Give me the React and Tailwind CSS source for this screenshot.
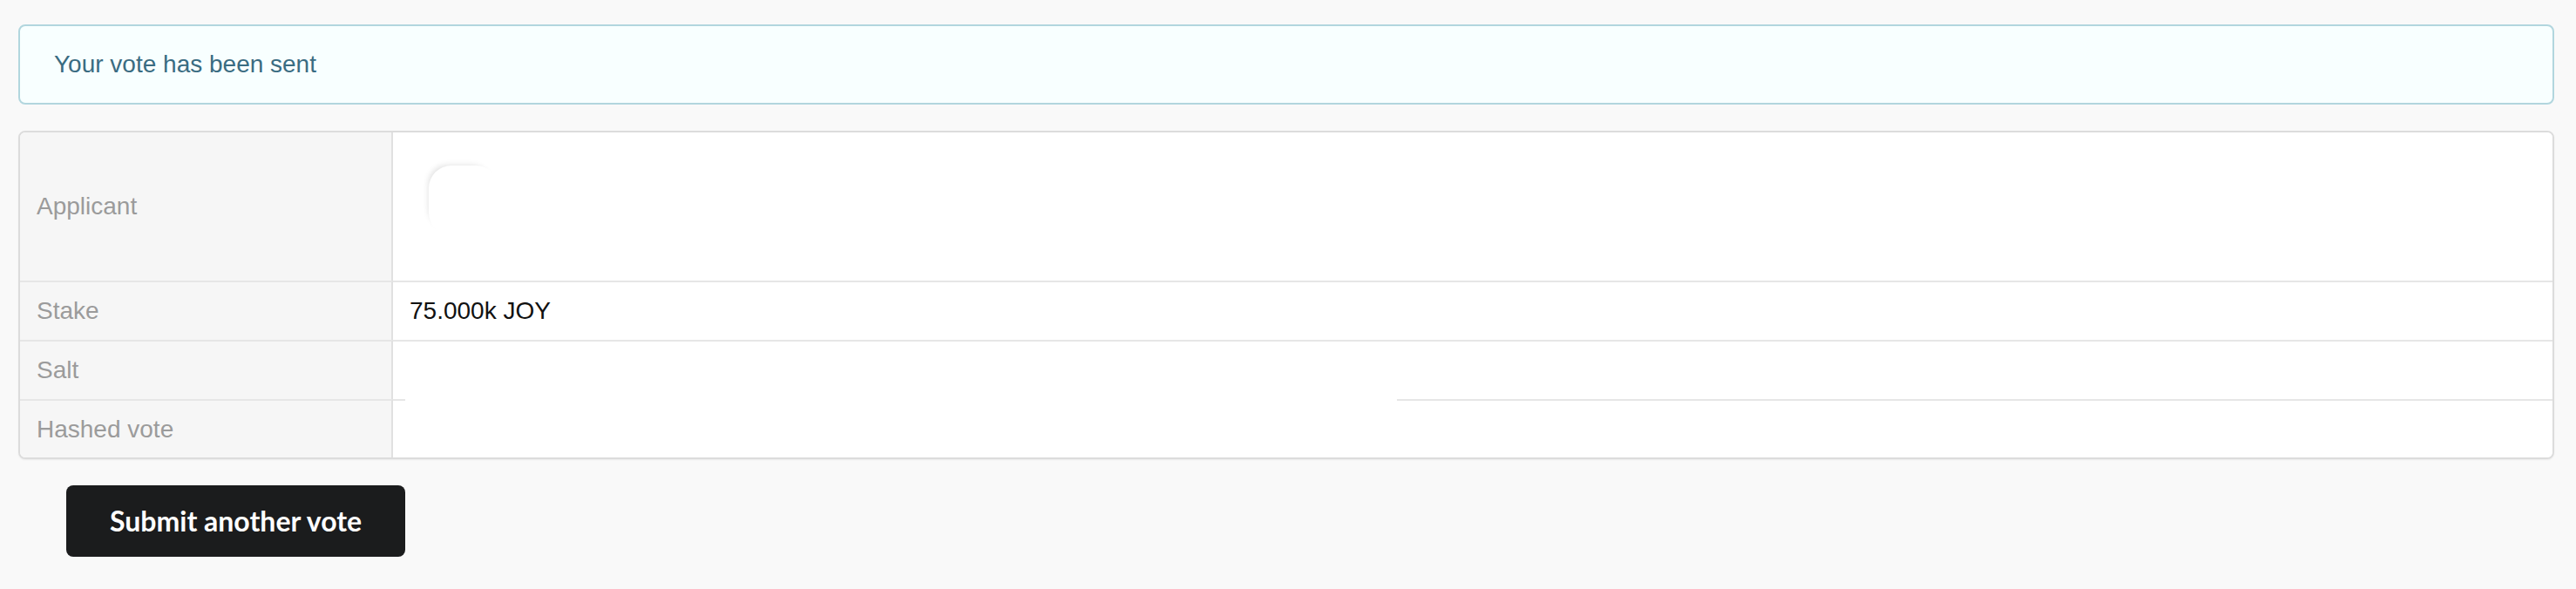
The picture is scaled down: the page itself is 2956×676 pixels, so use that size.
import React from "react";

const rows = [
  { label: "Applicant", h: "h-[170px]" },
  { label: "Stake", h: "h-[68px]", value: "75.000k JOY" },
  { label: "Salt", h: "h-[68px]" },
  { label: "Hashed vote", h: "h-[67px]" },
];

const App = () => {
  return (
    <div className="min-h-screen bg-[#f9f9f9] pt-[28px] pl-[21px] pr-[25px] font-['Liberation_Sans',Arial,sans-serif]">
      {/* info message */}
      <div className="h-[92px] flex items-center rounded-[8px] border-2 border-[#b2d6de] bg-[#f8ffff] pl-[39px]">
        <span className="text-[28px] leading-[40px] text-[#3a6c82]">Your vote has been sent</span>
      </div>

      {/* definition table */}
      <div className="mt-[30px] rounded-[8px] border-2 border-[#dcdcdc] bg-white overflow-hidden shadow-[0_1px_2px_rgba(0,0,0,0.06)]">
        <div className="grid grid-cols-[428px_1fr]">
          {rows.map((row, i) => (
            <React.Fragment key={row.label}>
              <div
                className={
                  "flex items-center bg-[#f6f6f6] border-r-2 border-[#e0e0e0] px-[19px] text-[28px] text-[#9b9b9b] " +
                  row.h +
                  (i > 0 ? " border-t-2 border-t-[#e6e6e6]" : "")
                }
              >
                {row.label}
              </div>
              {row.label === "Applicant" && (
                <div className={"bg-white " + row.h}>
                  {/* faint blanked-out identicon */}
                  <div className="ml-[41px] mt-[38px] w-[80px] h-[80px] bg-white rounded-[26px] shadow-[-5px_-5px_7px_-5px_rgba(0,0,0,0.13)]" />
                </div>
              )}
              {row.label === "Stake" && (
                <div className={"flex items-center bg-white border-t-2 border-[#e6e6e6] px-[19px] text-[28px] text-[#111] " + row.h}>
                  {row.value}
                </div>
              )}
              {row.label === "Salt" && (
                <div className={"bg-white border-t-2 border-[#e6e6e6] " + row.h} />
              )}
              {row.label === "Hashed vote" && (
                <div className={"flex flex-col bg-white " + row.h}>
                  <div className="flex h-[2px]">
                    <div className="w-[14px] bg-[#e6e6e6]" />
                    <div className="w-[1138px] bg-white" />
                    <div className="flex-1 bg-[#e6e6e6]" />
                  </div>
                </div>
              )}
            </React.Fragment>
          ))}
        </div>
      </div>

      <button className="mt-[30px] ml-[55px] h-[82px] px-[50px] rounded-[8px] bg-[#1b1c1d] text-white text-[32px] font-bold leading-none font-['Lato',sans-serif]">
        Submit another vote
      </button>
    </div>
  );
};

export default App;
